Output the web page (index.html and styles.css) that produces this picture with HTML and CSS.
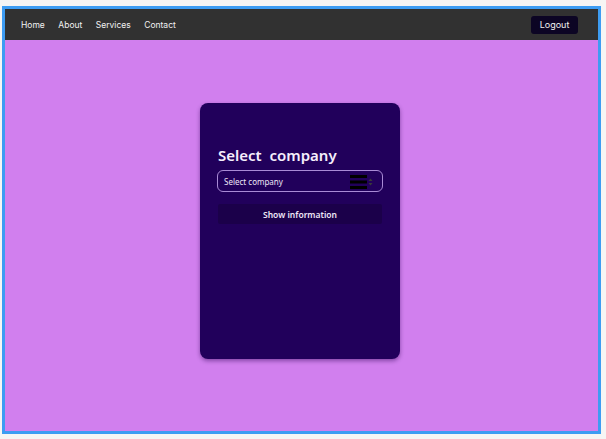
FILE: index.html
```html
<!DOCTYPE html>
<html>
<head>
<meta charset="utf-8">
<link rel="stylesheet" href="styles.css">
</head>
<body>
<div class="frame">
  <nav class="navbar">
    <div class="links">
      <a href="#">Home</a>
      <a href="#">About</a>
      <a href="#">Services</a>
      <a href="#">Contact</a>
    </div>
    <button class="logout">Logout</button>
  </nav>
  <main class="main">
    <div class="card">
      <h1 class="title">Select&nbsp; company</h1>
      <div class="select">
        <span>Select company</span>
        <span class="icon">
          <svg width="26" height="16" viewBox="0 0 26 16">
            <rect x="0" y="1" width="17" height="3" fill="#000"/>
            <rect x="0" y="6.5" width="17" height="3" fill="#000"/>
            <rect x="0" y="12" width="17" height="3" fill="#000"/>
            <path d="M18.5 7 L20.5 4.5 L22.5 7 Z" fill="#3a3a3a"/>
            <path d="M18.5 9 L20.5 11.5 L22.5 9 Z" fill="#3a3a3a"/>
          </svg>
        </span>
      </div>
      <button class="show">Show information</button>
    </div>
  </main>
</div>
</body>
</html>
```
FILE: styles.css
```css
html, body {
  margin: 0;
  padding: 0;
}
body {
  background: #f6f5f4;
  padding: 6px 5px 5px 2px;
  height: 439px;
  box-sizing: border-box;
}
.frame {
  border: 3px solid #3d9cf2;
  height: 428px;
  box-sizing: border-box;
  display: flex;
  flex-direction: column;
  background: #d17fee;
}
.navbar {
  height: 31px;
  background: #313131;
  display: flex;
  align-items: center;
  justify-content: space-between;
  padding: 0 20px 0 16px;
  flex-shrink: 0;
}
.links {
  display: flex;
  gap: 13.5px;
}
.links a {
  color: #f2f2f2;
  text-decoration: none;
  font-family: Inter, "Liberation Sans", sans-serif;
  font-size: 8.5px;
}
.logout {
  background: #0c0524;
  color: #f0f0f0;
  border: none;
  border-radius: 3px;
  font-family: Inter, "Liberation Sans", sans-serif;
  font-size: 9px;
  height: 18px;
  width: 47px;
  padding: 0;
}
.main {
  flex: 1;
  display: flex;
  justify-content: center;
  padding: 63px 3px 0 0;
}
.card {
  width: 200px;
  height: 256px;
  background: #21005b;
  border-radius: 8px;
  box-shadow: 0 2px 4px rgba(40, 0, 80, 0.45);
  box-sizing: border-box;
  padding: 42px 17px 0 17px;
  display: flex;
  flex-direction: column;
  font-family: "Noto Sans", "Open Sans", sans-serif;
}
.title {
  margin: 0;
  color: #f5eefc;
  font-size: 15px;
  font-weight: 600;
  line-height: 20px;
  padding-left: 1px;
}
.select {
  margin-top: 5px;
  height: 22px;
  border: 1px solid #a98bd6;
  border-radius: 6px;
  box-sizing: border-box;
  display: flex;
  align-items: center;
  justify-content: space-between;
  padding: 0 6px 0 6px;
  color: #eee6f7;
  font-size: 8px;
}
.icon {
  display: flex;
  align-items: center;
  padding-top: 1px;
}
.show {
  margin-top: 12px;
  margin-left: 1px;
  margin-right: 1px;
  height: 20px;
  border: none;
  border-radius: 2px;
  background: #1b004a;
  color: #eee6f6;
  font-family: "Noto Sans", "Open Sans", sans-serif;
  font-size: 8.5px;
  font-weight: 600;
  padding: 0;
}
```
